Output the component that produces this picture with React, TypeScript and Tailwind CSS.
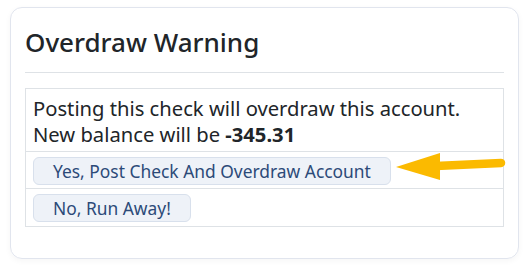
export default function App() {
    return (
        <div className="relative w-[530px] h-[269px] bg-white pl-[10px] pt-[7px]" style={{ fontFamily: '"Noto Sans", sans-serif' }}>
            <div className="w-[509px] h-[252px] border border-[#e1e5ee] rounded-[12px] shadow-[0_2px_6px_rgba(0,0,0,0.04)] px-[14px]">
                <div className="pt-[17px] pb-[13px] border-b border-[#dee2e6]">
                    <h2 className="text-[26px] leading-[34px] text-[#212529] font-medium">Overdraw Warning</h2>
                </div>
                <div className="mt-[15px] border border-[#dee2e6] text-[#212529]">
                    <div className="px-[7px] pt-[6px] pb-[4px] text-[20.2px] leading-[26px]">
                        Posting this check will overdraw this account.
                        <br />
                        New balance will be <span className="font-bold">-345.31</span>
                    </div>
                    <div className="border-t border-[#dee2e6] px-[7px] pt-[5px] pb-[3px]">
                        <button className="h-[28px] px-[19px] rounded-[6px] border border-[#d8e0ec] bg-[#eef2f8] text-[#2c4a78] text-[17.4px] leading-[26px]">
                            Yes, Post Check And Overdraw Account
                        </button>
                    </div>
                    <div className="border-t border-[#dee2e6] px-[7px] pt-[5px] pb-[4px]">
                        <button className="h-[28px] px-[19px] rounded-[6px] border border-[#d8e0ec] bg-[#eef2f8] text-[#2c4a78] text-[17.4px] leading-[26px]">
                            No, Run Away!
                        </button>
                    </div>
                </div>
            </div>
            <svg className="absolute left-[390px] top-[148px]" width="125" height="40" viewBox="0 0 125 40">
                <line x1="46" y1="18" x2="111" y2="15" stroke="#fbba00" strokeWidth="8.5" strokeLinecap="round" />
                <polygon points="6,19 50,5 50,32" fill="#fbba00" />
            </svg>
        </div>
    )
}
